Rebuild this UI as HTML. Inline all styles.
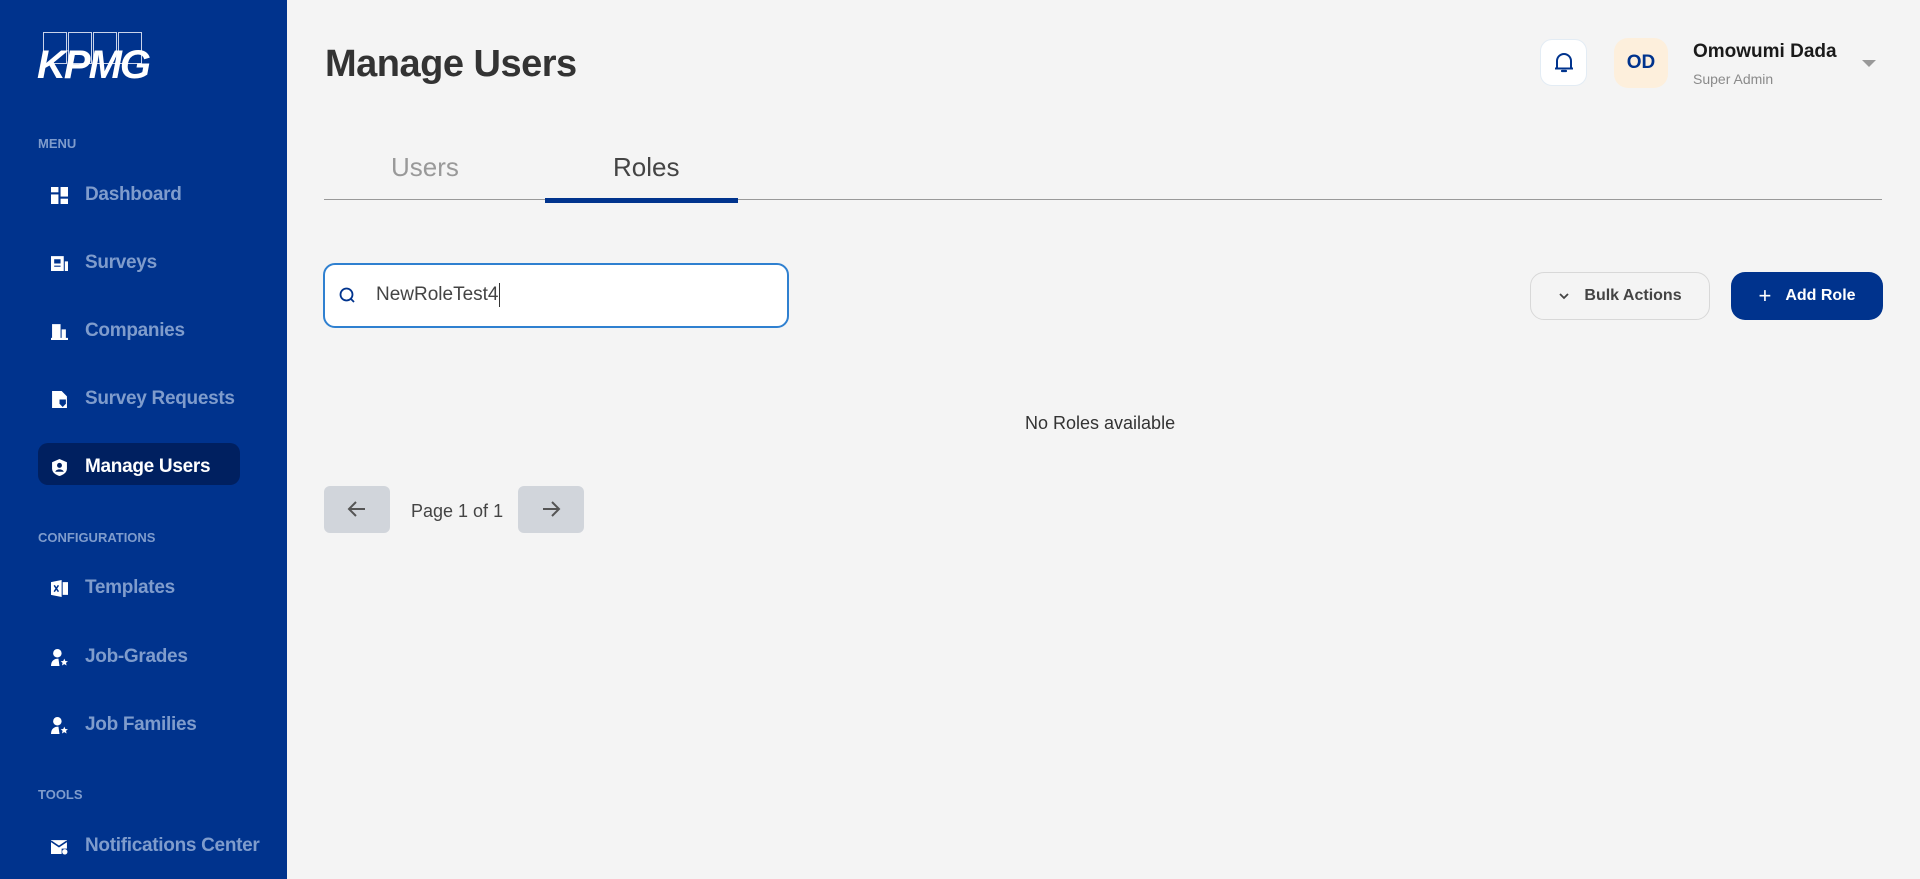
<!DOCTYPE html>
<html><head><meta charset="utf-8"><style>
*{box-sizing:border-box;margin:0;padding:0}
body{width:1920px;height:879px;background:#f4f4f4;font-family:"Liberation Sans",sans-serif;position:relative;overflow:hidden}
.sb{position:absolute;left:0;top:0;width:287px;height:879px;background:#00338d}
.sec{position:absolute;left:38px;font-size:13px;font-weight:bold;color:#7f9ccc;letter-spacing:0}
.it{position:absolute;left:51px;height:30px;display:flex;align-items:center;font-size:19px;font-weight:bold;color:#7f9ccc;letter-spacing:-0.3px}
.it svg{width:17px;height:17px;margin-right:17px;fill:#fff}
.act{position:absolute;left:38px;top:443px;width:202px;height:42px;background:#002060;border-radius:10px}
.abs{position:absolute}
</style></head><body>
<div class="sb">
 <div class="abs" style="left:43px;top:32px;width:100px;height:32px">
  <div class="abs" style="left:0;top:0;width:24px;height:32px;border:1.5px solid #c9d3ea"></div>
  <div class="abs" style="left:25px;top:0;width:24px;height:32px;border:1.5px solid #c9d3ea"></div>
  <div class="abs" style="left:50px;top:0;width:24px;height:32px;border:1.5px solid #c9d3ea"></div>
  <div class="abs" style="left:75px;top:0;width:24px;height:32px;border:1.5px solid #c9d3ea"></div>
 </div>
 <div class="abs" style="left:37px;top:45px;font-size:40px;font-weight:bold;font-style:italic;color:#fff;letter-spacing:-2px;line-height:40px">KPMG</div>
 <div class="sec" style="top:136px">MENU</div>
 <div class="it" style="top:180px"><svg viewBox="0 0 16 16"><rect x="0" y="0" width="7" height="5"/><rect x="0" y="7" width="7" height="9"/><rect x="9" y="0" width="7" height="9"/><rect x="9" y="11" width="7" height="5"/></svg>Dashboard</div>
 <div class="it" style="top:248px"><svg viewBox="0 0 16 16"><path d="M0 1h12v14H0z M3 4v4h6V4z M3 10v1h6v-1z M13 6h3v9h-3z"/></svg>Surveys</div>
 <div class="it" style="top:316px"><svg viewBox="0 0 16 16"><path d="M1 1h8v13H1z M10 6h4v8h-4z M0 14h16v2H0z" /></svg>Companies</div>
 <div class="it" style="top:384px"><svg viewBox="0 0 16 16"><path d="M1 0h9l5 5v11H1z"/><path d="M8 8h6v4l-3 3-3-3z" fill="#00338d"/></svg>Survey Requests</div>
 <div class="act"></div>
 <div class="it" style="top:452px;color:#fff"><svg viewBox="0 0 16 16"><path d="M8 0l7 3v6c0 4-4 6-7 7-3-1-7-3-7-7V3z"/><circle cx="8" cy="6" r="2.3" fill="#002060"/><path d="M4 12c1-3 7-3 8 0z" fill="#002060"/></svg>Manage Users</div>
 <div class="sec" style="top:530px">CONFIGURATIONS</div>
 <div class="it" style="top:573px"><svg viewBox="0 0 16 16"><path d="M0 2l10-2v16L0 14z M11 2h5v12h-5z"/><path d="M3 5l4 6M7 5l-4 6" stroke="#00338d" stroke-width="1.4"/></svg>Templates</div>
 <div class="it" style="top:642px"><svg viewBox="0 0 16 16"><circle cx="6" cy="4" r="4"/><path d="M0 16c0-5 3-7 7-7l1 7z"/><path d="M12.5 9l1 2.3 2.4.2-1.8 1.6.6 2.4-2.2-1.3-2.2 1.3.6-2.4-1.8-1.6 2.4-.2z"/></svg>Job-Grades</div>
 <div class="it" style="top:710px"><svg viewBox="0 0 16 16"><circle cx="6" cy="4" r="4"/><path d="M0 16c0-5 3-7 7-7l1 7z"/><path d="M12.5 9l1 2.3 2.4.2-1.8 1.6.6 2.4-2.2-1.3-2.2 1.3.6-2.4-1.8-1.6 2.4-.2z"/></svg>Job Families</div>
 <div class="sec" style="top:787px">TOOLS</div>
 <div class="it" style="top:831px"><svg viewBox="0 0 16 16"><path d="M0 2h15v8h-5v5H0z"/><path d="M0 3l7.5 5L15 3" stroke="#00338d" stroke-width="1.5" fill="none"/><circle cx="13" cy="13" r="2.5"/></svg>Notifications Center</div>
</div>

<div class="abs" style="left:325px;top:43px;font-size:38px;font-weight:bold;color:#333;letter-spacing:-0.5px">Manage Users</div>

<div class="abs" style="left:1540px;top:39px;width:47px;height:47px;background:#fff;border:1px solid #e3ecf4;border-radius:12px"></div>
<svg class="abs" style="left:1552px;top:50px" width="24" height="25" viewBox="0 0 24 25"><path d="M5 18V11a7 7 0 0 1 14 0v7" fill="none" stroke="#00338d" stroke-width="2"/><path d="M3 18.5h18" stroke="#00338d" stroke-width="2"/><path d="M10 21h4" stroke="#00338d" stroke-width="2.2" stroke-linecap="round"/></svg>
<div class="abs" style="left:1614px;top:38px;width:54px;height:50px;background:#fdefdc;border-radius:14px;color:#00338d;font-weight:bold;font-size:19px;display:flex;align-items:center;justify-content:center">OD</div>
<div class="abs" style="left:1693px;top:41px;font-size:19px;font-weight:bold;color:#1a1a1a">Omowumi Dada</div>
<div class="abs" style="left:1693px;top:71px;font-size:14px;color:#8a8a8a">Super Admin</div>
<div class="abs" style="left:1862px;top:60px;width:0;height:0;border-left:7px solid transparent;border-right:7px solid transparent;border-top:7px solid #999"></div>

<div class="abs" style="left:391px;top:152px;font-size:26px;color:#999">Users</div>
<div class="abs" style="left:613px;top:152px;font-size:26px;color:#444">Roles</div>
<div class="abs" style="left:324px;top:199px;width:1558px;height:1px;background:#999"></div>
<div class="abs" style="left:545px;top:198px;width:193px;height:5px;background:#00338d"></div>

<div class="abs" style="left:323px;top:263px;width:466px;height:65px;background:#fff;border:2.5px solid #2f80d0;border-radius:12px"></div>
<svg class="abs" style="left:339px;top:287px" width="18" height="18" viewBox="0 0 18 18"><circle cx="7.5" cy="7.5" r="6" fill="none" stroke="#00338d" stroke-width="1.8"/><path d="M12 12l3 3" stroke="#00338d" stroke-width="1.8"/></svg>
<div class="abs" style="left:376px;top:284px;font-size:19px;color:#444">NewRoleTest4</div>
<div class="abs" style="left:499px;top:283px;width:1px;height:24px;background:#333"></div>

<div class="abs" style="left:1530px;top:272px;width:180px;height:48px;border:1px solid #d8d8d8;border-radius:14px;display:flex;align-items:center;justify-content:center;font-size:16px;font-weight:bold;color:#444"><svg width="12" height="8" viewBox="0 0 12 8" style="margin-right:14px"><path d="M2 2l4 4 4-4" fill="none" stroke="#444" stroke-width="1.8"/></svg>Bulk Actions</div>
<div class="abs" style="left:1731px;top:272px;width:152px;height:48px;background:#00338d;border-radius:14px;display:flex;align-items:center;justify-content:center;font-size:16px;font-weight:bold;color:#fff"><span style="font-size:22px;font-weight:normal;margin-right:14px">+</span>Add Role</div>

<div class="abs" style="left:1025px;top:413px;font-size:18px;color:#333">No Roles available</div>

<div class="abs" style="left:324px;top:486px;width:66px;height:47px;background:#d1d5db;border-radius:6px"></div>
<svg class="abs" style="left:347px;top:500px" width="20" height="18" viewBox="0 0 20 18"><path d="M18 9H3M9 2L2 9l7 7" fill="none" stroke="#555" stroke-width="2"/></svg>
<div class="abs" style="left:411px;top:501px;font-size:18px;color:#444">Page 1 of 1</div>
<div class="abs" style="left:518px;top:486px;width:66px;height:47px;background:#d1d5db;border-radius:6px"></div>
<svg class="abs" style="left:541px;top:500px" width="20" height="18" viewBox="0 0 20 18"><path d="M2 9h15M11 2l7 7-7 7" fill="none" stroke="#555" stroke-width="2"/></svg>
</body></html>
